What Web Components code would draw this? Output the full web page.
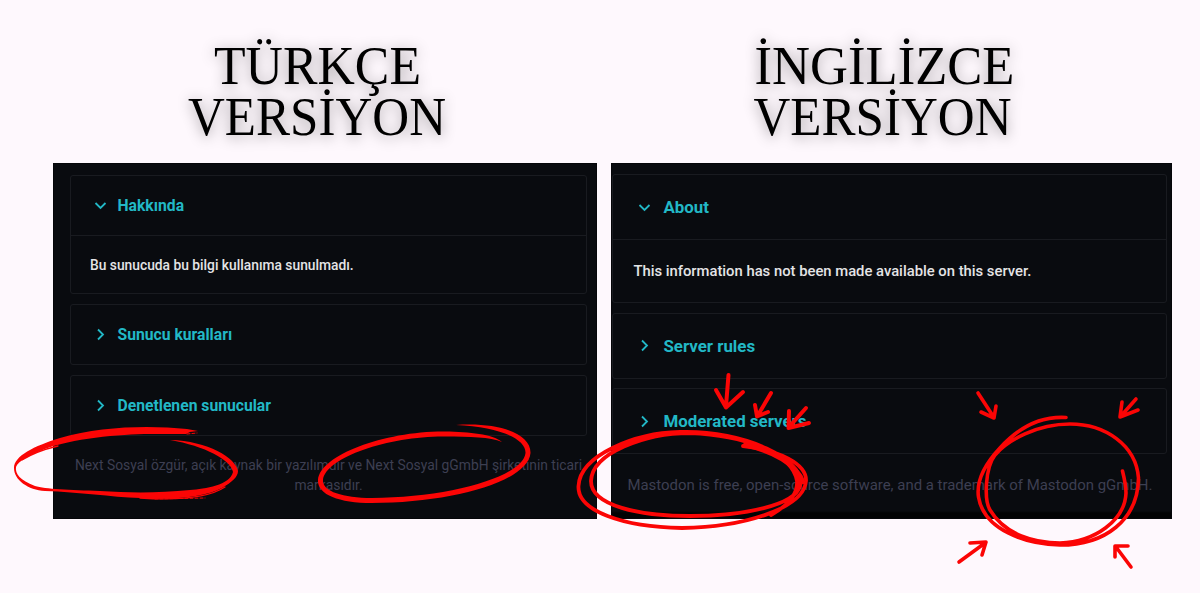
<!DOCTYPE html>
<html lang="tr">
<head>
<meta charset="utf-8">
<title>Versiyonlar</title>
<style>
  body {
    margin: 0;
    background: #fef8fd;
    font-family: Roboto, "Liberation Sans", sans-serif;
  }
</style>
</head>
<body>
<version-board>
  <version-column style="--panel-width: 544px">
    <version-title slot="title" first="TÜRKÇE" second="VERSİYON" x1="161" w1="207" x2="135" w2="258"></version-title>
    <about-panel style="--pad: 12px 10px 0 17px; --gap: 10px; --head: 59px; --body: 57px; --inset: 19px; --icon-inset: 23px; --icon-gap: 10.5px; --label: 15.7px; --text: 13.8px; --note: 13.85px; --note-top: 19px">
      <about-section label="Hakkında" open>Bu sunucuda bu bilgi kullanıma sunulmadı.</about-section>
      <about-section label="Sunucu kuralları"></about-section>
      <about-section label="Denetlenen sunucular"></about-section>
      <span slot="note">Next Sosyal özgür, açık kaynak bir yazılımdır ve Next Sosyal gGmbH şirketinin ticari<br>markasıdır.</span>
    </about-panel>
  </version-column>
  <version-column style="--panel-width: 561px">
    <version-title slot="title" first="İNGİLİZCE" second="VERSİYON" x1="143.5" w1="260" x2="142.5" w2="258"></version-title>
    <about-panel style="--pad: 11px 5px 0 1px; --gap: 9.5px; --head: 64px; --body: 62px; --inset: 20px; --icon-inset: 25px; --icon-gap: 12px; --label: 16.9px; --text: 14.8px; --note: 14.95px; --note-top: 21px; --floor: #020304">
      <about-section label="About" open>This information has not been made available on this server.</about-section>
      <about-section label="Server rules"></about-section>
      <about-section label="Moderated servers"></about-section>
      <span slot="note">Mastodon is free, open-source software, and a trademark of Mastodon gGmbH.</span>
    </about-panel>
  </version-column>
  <red-marks slot="marks"></red-marks>
</version-board>

<script>
class VersionBoard extends HTMLElement {
  constructor() {
    super();
    this.attachShadow({ mode: 'open' });
    this.shadowRoot.innerHTML = `
      <style>
        :host {
          position: relative;
          display: block;
          width: 1200px;
          height: 593px;
          overflow: hidden;
        }
        .columns {
          display: flex;
          gap: 14.4px;
          padding-left: 53px;
        }
      </style>
      <div class="columns"><slot></slot></div>
      <slot name="marks"></slot>
    `;
  }
}

class VersionColumn extends HTMLElement {
  constructor() {
    super();
    this.attachShadow({ mode: 'open' });
    this.shadowRoot.innerHTML = `
      <style>
        :host {
          display: flex;
          flex-direction: column;
          width: var(--panel-width);
        }
      </style>
      <slot name="title"></slot>
      <slot></slot>
    `;
  }
}

class VersionTitle extends HTMLElement {
  constructor() {
    super();
    this.attachShadow({ mode: 'open' });
  }

  connectedCallback() {
    const get = (name) => this.getAttribute(name);
    this.shadowRoot.innerHTML = `
      <style>
        :host { display: block; height: 163px; }
        svg {
          display: block;
          width: 100%;
          height: 163px;
          overflow: visible;
          filter: drop-shadow(0 2px 7px rgba(0, 0, 0, 0.4));
        }
        text {
          font: 55px "Liberation Serif", serif;
          fill: #000;
        }
      </style>
      <svg>
        <text x="${get('x1')}" y="84" textLength="${get('w1')}" lengthAdjust="spacingAndGlyphs">${get('first')}</text>
        <text x="${get('x2')}" y="135" textLength="${get('w2')}" lengthAdjust="spacingAndGlyphs">${get('second')}</text>
      </svg>
    `;
  }
}

class AboutPanel extends HTMLElement {
  constructor() {
    super();
    this.attachShadow({ mode: 'open' });
    this.shadowRoot.innerHTML = `
      <style>
        :host {
          display: flex;
          flex-direction: column;
          box-sizing: border-box;
          height: 355.5px;
          padding: var(--pad);
          background: linear-gradient(#090b0f 0 348px, var(--floor, #090b0f) 350px);
          box-shadow: inset 0 0 0 1px #050609;
        }
        .list {
          display: flex;
          flex-direction: column;
          gap: var(--gap);
        }
        .note {
          margin-top: var(--note-top);
          color: #3d3f52;
          font-size: var(--note);
          line-height: 20px;
          text-align: center;
          white-space: nowrap;
        }
      </style>
      <div class="list"><slot></slot></div>
      <div class="note"><slot name="note"></slot></div>
    `;
  }
}

class AboutSection extends HTMLElement {
  constructor() {
    super();
    this.attachShadow({ mode: 'open' });
  }

  connectedCallback() {
    const open = this.hasAttribute('open');
    const chevron = open ? 'M1.5 4 L6.5 9 L11.5 4' : 'M4 1.5 L9 6.5 L4 11.5';
    this.shadowRoot.innerHTML = `
      <style>
        :host {
          display: block;
          border: 1px solid #191b20;
          border-radius: 3px;
        }
        .head {
          display: flex;
          align-items: center;
          gap: var(--icon-gap, 10px);
          height: var(--head);
          padding-left: var(--icon-inset);
          color: #22b8c6;
          font-size: var(--label);
          font-weight: 700;
        }
        svg {
          width: 13px;
          height: 13px;
          fill: none;
          stroke: #22b8c6;
          stroke-width: 1.8;
        }
        .body {
          display: flex;
          align-items: center;
          height: var(--body);
          padding-left: var(--inset);
          border-top: 1px solid #191b20;
          color: #e4e4e6;
          font-size: var(--text);
          font-weight: 500;
          white-space: nowrap;
        }
      </style>
      <div class="head">
        <svg viewBox="0 0 13 13"><path d="${chevron}"/></svg>
        <span>${this.getAttribute('label')}</span>
      </div>
      ${open ? '<div class="body"><slot></slot></div>' : ''}
    `;
  }
}

class RedMarks extends HTMLElement {
  constructor() {
    super();
    this.attachShadow({ mode: 'open' });
    this.shadowRoot.innerHTML = `
      <style>
        :host {
          position: absolute;
          inset: 0;
          pointer-events: none;
        }
        svg { display: block; }
        .fill { fill: #fb0505; }
        .line {
          fill: none;
          stroke: #fb0505;
          stroke-linecap: round;
          stroke-linejoin: round;
        }
      </style>
      <svg width="1200" height="593" viewBox="0 0 1200 593">
        <!-- dry brush oval -->
        <path class="fill" d="M198 431 L187 429 C150 425 100 426 60 438 C34 446 14 456 14 468 C14 480 28 490 45 491 C80 492 110 497 140 498 C175 500 205 497 222 488 C232 482 238 477 238 471 C236 458 208 441 170 440 C205 446 231 460 233 472 C230 485 205 489 190 490 C160 493 130 493 100 491 C70 490 45 489 35 486 C20 480 15 474 16 467 C18 461 30 455 45 449 C70 439 120 434 150 434 L186 434 L190 432 Z"/>
        <path class="line" stroke-width="1.3" d="M22 460 C33 453 45 449 58 446 M140 498 C170 500 205 500 225 487"/>
        <path class="line" stroke-width="1" stroke-dasharray="3 2" d="M187 434 L197 433 M155 499 L205 498 M18 478 L34 488"/>
        <!-- tapered oval -->
        <path class="fill" d="M456 425 C500 422 531 434 530.500 453 C528 482 450 503 372 503 C338 503 317 494 318 480 C320 455 385 431 445 431.500 C470 432 492 434 502 442 C490 437 470 436.500 445 436.500 C390 436 326 457 323 480 C322 491 342 498 372 498 C448 498 523 477 525.500 453 C526 438 498 427 456 425 Z"/>
        <!-- double ovals -->
        <path class="line" stroke-width="3.800" d="M743 446 C779 450 807 464 806 481 C804 507 748 527 682 528 C623 527 577 511 578.500 486 C580 455 635 433 680 432 C745 430 806 460 800 486 C795 505 745 516 690 516 C640 516 591 506 591 481 C592 453 645 433 690 433 C742 435 792 452 797 481 C798 495 785 507 771 515"/>
        <path class="line" stroke-width="4.500" d="M745 445 C772 451 797 464 803 482"/>
        <path class="line" stroke-width="3.600" d="M1066 417.500 C1040 416 1019 427 1000 448 C985 464 976 480 978.500 497 C984 530 1025 544 1060 545 C1105 545 1138 520 1138.500 478 C1136 445 1105 424 1070 424 C1037 424 1008 440 995 455 C985 468 984 500 990 510 C1005 535 1035 543 1060 543 C1095 542 1125 520 1126 493 C1126 485 1124 477 1122.500 471"/>
        <!-- arrows -->
        <g class="line" stroke-width="4">
          <path d="M728.500 375 L726 406 M716 390 L726 407.500 L743 392"/>
          <path d="M771 393 L758 415 M755 405 L757 416.500 L768 412"/>
          <path d="M806 408 L789 427 M789 411 L788.500 428 L809 423"/>
        </g>
        <g class="line" stroke-width="3.600">
          <path d="M978 393 L993 416 M981 412 L994 418 L996 406"/>
          <path d="M1136 399 L1121 416 M1122 402 L1120 417 L1138 410"/>
          <path d="M959 562 L985 543 M970 543 L986 542 L982 555"/>
          <path d="M1131 567 L1116 547 M1115 557 L1115 546 L1128 546"/>
        </g>
      </svg>
    `;
  }
}

customElements.define('version-board', VersionBoard);
customElements.define('version-column', VersionColumn);
customElements.define('version-title', VersionTitle);
customElements.define('about-panel', AboutPanel);
customElements.define('about-section', AboutSection);
customElements.define('red-marks', RedMarks);
</script>
</body>
</html>
